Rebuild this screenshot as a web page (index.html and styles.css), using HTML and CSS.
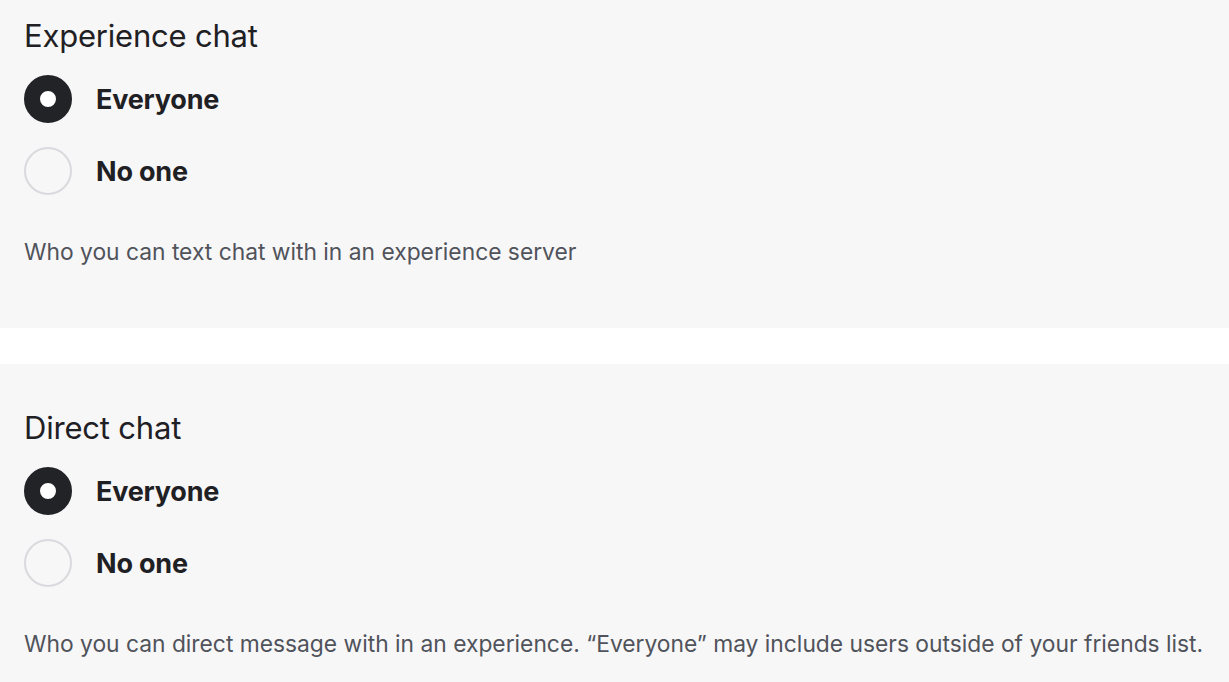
FILE: index.html
```html
<!DOCTYPE html>
<html lang="en">
<head>
    <meta charset="UTF-8">
    <meta name="viewport" content="width=device-width, initial-scale=1.0">
    <link rel="stylesheet" href="styles.css">
    <title>Chat settings</title>
</head>
<body>
    <div class="settings">
        <div class="panel">
            <h2>Experience chat</h2>
            <div class="options">
                <label class="option">
                    <input type="radio" name="exp" checked>
                    <span>Everyone</span>
                </label>
                <label class="option">
                    <input type="radio" name="exp">
                    <span>No one</span>
                </label>
            </div>
            <p class="desc">Who you can text chat with in an experience server</p>
        </div>
        <div class="panel">
            <h2>Direct chat</h2>
            <div class="options">
                <label class="option">
                    <input type="radio" name="direct" checked>
                    <span>Everyone</span>
                </label>
                <label class="option">
                    <input type="radio" name="direct">
                    <span>No one</span>
                </label>
            </div>
            <p class="desc">Who you can direct message with in an experience. “Everyone” may include users outside of your friends list.</p>
        </div>
    </div>
</body>
</html>
```
FILE: styles.css
```css
*{
    padding: 0;
    margin: 0;
    box-sizing: border-box;
}
body{
    background: #fff;
    font-family: Inter, "Noto Sans", sans-serif;
    color: #1f2024;
    overflow: hidden;
}
.settings{
    display: flex;
    flex-direction: column;
    gap: 36px;
    margin-top: -28px;
}
.panel{
    background: #f7f7f7;
    padding: 46px 12px 62px 24px;
}
h2{
    font-size: 31px;
    font-weight: 400;
    line-height: 36px;
    letter-spacing: -0.2px;
}
.options{
    display: flex;
    flex-direction: column;
    gap: 24px;
    margin-top: 21px;
}
.option{
    display: flex;
    align-items: center;
    gap: 24px;
    cursor: pointer;
}
.option input{
    appearance: none;
    width: 48px;
    height: 48px;
    border-radius: 50%;
    border: 2px solid #d9d9de;
    background: transparent;
    margin: 0;
    cursor: pointer;
}
.option input:checked{
    border: 16px solid #222327;
    background: #fff;
}
.option span{
    font-size: 27px;
    font-weight: 700;
    letter-spacing: -0.2px;
}
.desc{
    margin-top: 43px;
    font-size: 22.8px;
    line-height: 28px;
    color: #50535b;
    white-space: nowrap;
}
```
